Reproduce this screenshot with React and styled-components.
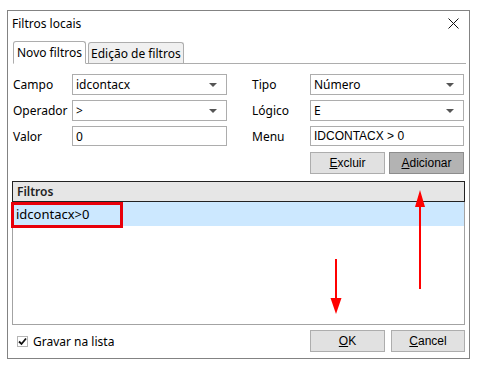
import { Fragment } from "react";
import styled, { createGlobalStyle } from "styled-components";

const Global = createGlobalStyle`
  body {
    margin: 0;
    background: #fff;
    font-family: "Noto Sans", "Open Sans", sans-serif;
    font-size: 12px;
    color: #000;
  }
`;

const Window = styled.div`
  box-sizing: border-box;
  margin: 10px 0 0 7px;
  width: 463px;
  height: 349px;
  border: 1px solid #838383;
  display: flex;
  flex-direction: column;
  background: #fff;
`;

const TitleBar = styled.div`
  height: 28px;
  display: flex;
  align-items: center;
  justify-content: space-between;
  padding: 0 10px 0 4px;
  box-sizing: border-box;
`;

const Title = styled.span`
  font-size: 12px;
  margin-top: -3px;
`;

const Close = styled.svg`
  width: 11px;
  height: 11px;
  margin-top: -4px;
`;

const TabStrip = styled.div`
  display: flex;
  align-items: flex-end;
  height: 23px;
  margin: 1px 3px 0 5px;
  border-bottom: 1px solid #adadad;
`;

const Tab = styled.div`
  box-sizing: border-box;
  height: ${(p) => (p.$active ? "23px" : "21px")};
  padding: 0 ${(p) => (p.$active ? "3px" : "2px")};
  margin-right: 2px;
  margin-bottom: ${(p) => (p.$active ? "-1px" : "0")};
  display: flex;
  align-items: center;
  border: 1px solid #adadad;
  border-bottom: ${(p) => (p.$active ? "1px solid #fff" : "none")};
  border-radius: 3px 3px 0 0;
  background: ${(p) => (p.$active ? "#fff" : "#f0f0f0")};
  white-space: nowrap;
`;

const Form = styled.div`
  display: grid;
  grid-template-columns: 59px 155px 25px 58px 154px;
  row-gap: 5px;
  margin: 10px 0 0 5px;
  align-items: center;
`;

const Label = styled.span`
  line-height: 19px;
`;

const Spacer = styled.span``;

const SelectBox = styled.div`
  box-sizing: border-box;
  height: ${(p) => p.$h || 21}px;
  border: 1px solid #adadad;
  display: flex;
  align-items: center;
  justify-content: space-between;
  padding: 0 9px 0 3px;
  background: #fff;
  font-family: ${(p) => (p.$mono ? '"Liberation Sans", Arial, sans-serif' : "inherit")};
`;

const Caret = styled.span`
  width: 0;
  height: 0;
  border-left: 4px solid transparent;
  border-right: 4px solid transparent;
  border-top: 4px solid #555;
`;

const ButtonRow = styled.div`
  display: flex;
  justify-content: flex-end;
  gap: 4px;
  margin: 6px 5px 0 0;
`;

const Button = styled.div`
  box-sizing: border-box;
  width: ${(p) => p.$w || 75}px;
  height: 22px;
  display: flex;
  align-items: center;
  justify-content: center;
  border: 1px solid ${(p) => (p.$pressed ? "#8d8d8d" : "#adadad")};
  background: ${(p) => (p.$pressed ? "#b3b3b3" : "#e1e1e1")};
  font-family: "Liberation Sans", Arial, sans-serif;
  font-size: 12px;
  u {
    text-decoration: underline;
  }
`;

const Table = styled.div`
  position: relative;
  box-sizing: border-box;
  margin: 7px 4px 0 4px;
  height: 144px;
  border: 1px solid #a3a3a3;
  border-top: none;
`;

const Header = styled.div`
  box-sizing: border-box;
  height: 21px;
  margin: 0 -1px;
  border: 1px solid #222;
  background: #e6e6e6;
  display: flex;
  align-items: center;
  padding-left: 4px;
  font-weight: 600;
  color: #222;
`;

const Row = styled.div`
  height: 24px;
  display: flex;
  align-items: center;
  padding-left: 3px;
  background: #cce8ff;
  font-size: 13px;
`;

const Highlight = styled.div`
  position: absolute;
  left: -2px;
  top: 21px;
  width: 112px;
  height: 26px;
  box-sizing: border-box;
  border: 3px solid #e8000b;
`;

const Arrow = styled.svg`
  position: absolute;
  left: ${(p) => p.$x}px;
  top: ${(p) => p.$y}px;
  overflow: visible;
`;

const Footer = styled.div`
  display: flex;
  align-items: center;
  margin: 5px 4px 0 9px;
`;

const Check = styled.div`
  display: flex;
  align-items: center;
  gap: 5px;
  flex: 1;
`;

const Box = styled.span`
  box-sizing: border-box;
  width: 11px;
  height: 11px;
  border: 1px solid #b5b5b5;
  display: flex;
  align-items: center;
  justify-content: center;
`;

const FooterButtons = styled.div`
  display: flex;
  gap: 6px;
`;

const fields = [
  ["Campo", "idcontacx", "Tipo", "Número"],
  ["Operador", ">", "Lógico", "E"],
];

export default function App() {
  return (
    <>
      <Global />
      <Window>
        <TitleBar>
          <Title>Filtros locais</Title>
          <Close viewBox="0 0 11 11">
            <path d="M0.5 0.5 L10.5 10.5 M10.5 0.5 L0.5 10.5" stroke="#111" strokeWidth="1" />
          </Close>
        </TitleBar>

        <TabStrip>
          <Tab $active>Novo filtros</Tab>
          <Tab>Edição de filtros</Tab>
        </TabStrip>

        <Form>
          {fields.map(([l1, v1, l2, v2]) => (
            <Fragment key={l1}>
              <Label>{l1}</Label>
              <SelectBox>
                {v1}
                <Caret />
              </SelectBox>
              <Spacer />
              <Label>{l2}</Label>
              <SelectBox>
                {v2}
                <Caret />
              </SelectBox>
            </Fragment>
          ))}
          <Label>Valor</Label>
          <SelectBox $h={20}>0</SelectBox>
          <Spacer />
          <Label>Menu</Label>
          <SelectBox $h={20} $mono>
            IDCONTACX &gt; 0
          </SelectBox>
        </Form>

        <ButtonRow>
          <Button>
            <span>
              <u>E</u>xcluir
            </span>
          </Button>
          <Button $pressed>
            <span>
              <u>A</u>dicionar
            </span>
          </Button>
        </ButtonRow>

        <Table>
          <Header>Filtros</Header>
          <Row>idcontacx&gt;0</Row>
          <Highlight />
          <Arrow $x={402} $y={9} width="10" height="100">
            <path d="M5 0 L10 17 L6 17 L6 99 L4 99 L4 17 L0 17 Z" fill="#f00" />
          </Arrow>
          <Arrow $x={317} $y={78} width="12" height="56">
            <path d="M5 0 L7 0 L7 39 L11.5 39 L6 55 L0.5 39 L5 39 Z" fill="#f00" />
          </Arrow>
        </Table>

        <Footer>
          <Check>
            <Box>
              <svg width="9" height="9" viewBox="0 0 9 9">
                <path d="M1 4.5 L3.5 7 L8 1.5" stroke="#111" strokeWidth="1.8" fill="none" />
              </svg>
            </Box>
            Gravar na lista
          </Check>
          <FooterButtons>
            <Button>
              <span>
                <u>O</u>K
              </span>
            </Button>
            <Button $w={74}>
              <span>
                <u>C</u>ancel
              </span>
            </Button>
          </FooterButtons>
        </Footer>
      </Window>
    </>
  );
}
